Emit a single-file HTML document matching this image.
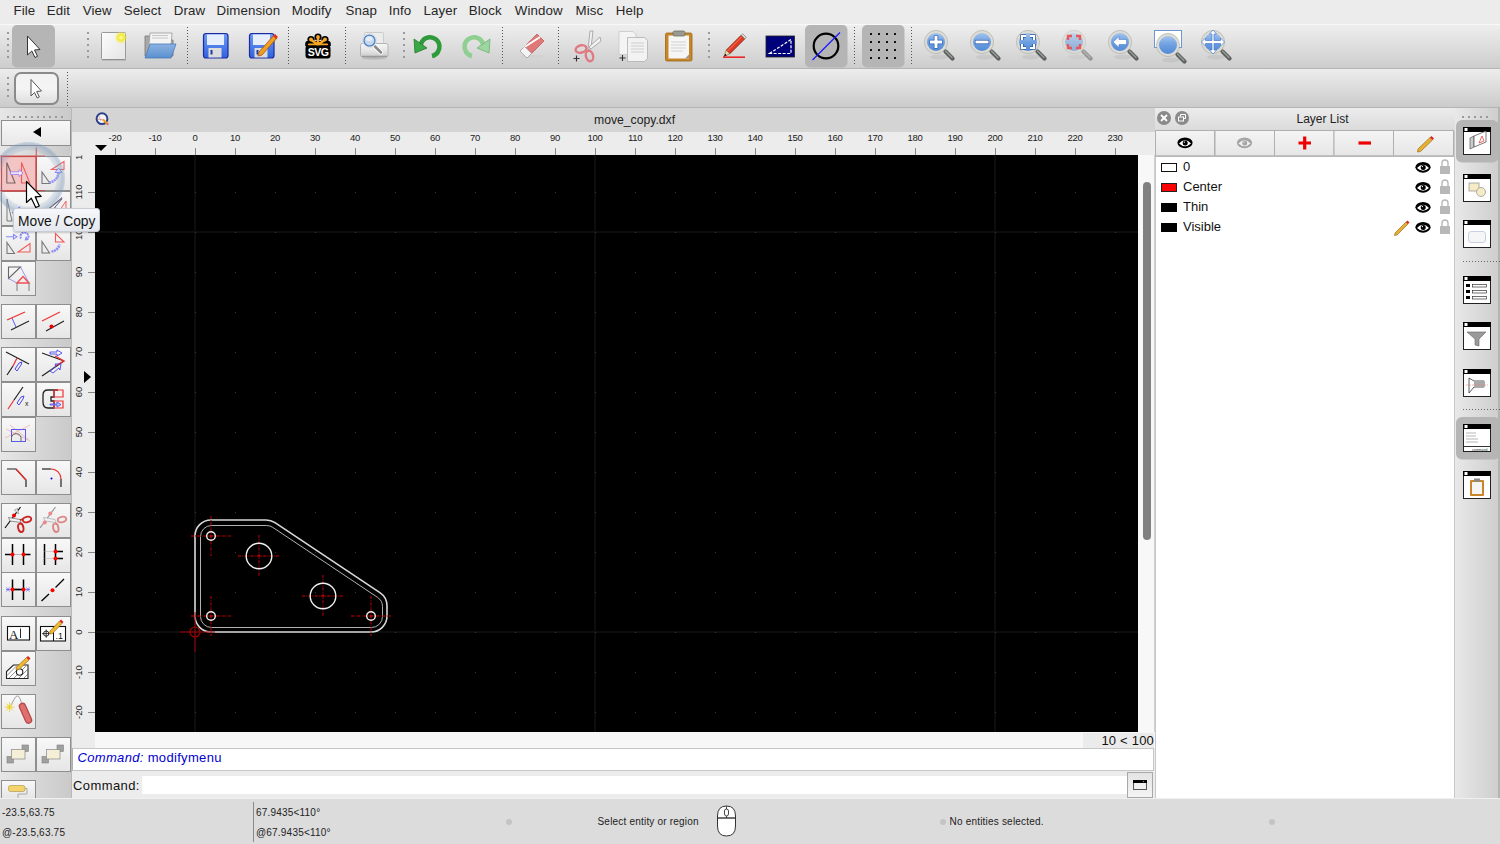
<!DOCTYPE html>
<html><head><meta charset="utf-8"><style>
*{margin:0;padding:0;box-sizing:border-box}
html,body{width:1500px;height:844px;overflow:hidden;background:#ececec;font-family:"Liberation Sans",sans-serif;color:#222}
.a{position:absolute}
.mi{position:absolute;top:2px;font-size:13.3px;line-height:17px;color:#262626;letter-spacing:0.1px}
.rl{position:absolute;width:40px;text-align:center;font-size:9.5px;line-height:12px;color:#222;letter-spacing:-0.3px}
.rv{position:absolute;width:23px;height:40px}
.rv span{position:absolute;left:50%;top:50%;width:40px;margin-left:-20px;margin-top:-6px;text-align:center;font-size:9.5px;line-height:12px;transform:rotate(-90deg);color:#222}
.lt{position:absolute;left:1183px;font-size:13px;line-height:16px;color:#111}
.st{position:absolute;font-size:10px;line-height:12px;color:#222;letter-spacing:0.2px}

</style></head><body>
<div class="a" style="left:0;top:0;width:1500px;height:23px;background:#ececec"></div>
<div class="mi" style="left:13.5px">File</div><div class="mi" style="left:46.7px">Edit</div><div class="mi" style="left:82.8px">View</div><div class="mi" style="left:123.7px">Select</div><div class="mi" style="left:173.7px">Draw</div><div class="mi" style="left:216.6px">Dimension</div><div class="mi" style="left:291.8px">Modify</div><div class="mi" style="left:345.6px">Snap</div><div class="mi" style="left:388.7px">Info</div><div class="mi" style="left:423.6px">Layer</div><div class="mi" style="left:468.7px">Block</div><div class="mi" style="left:514.8px">Window</div><div class="mi" style="left:575.6px">Misc</div><div class="mi" style="left:615.7px">Help</div>
<div class="a" style="left:0;top:24px;width:1500px;height:45px;background:linear-gradient(#eeeeee,#cdcdcd);border-top:1px solid #f8f8f8;border-bottom:1px solid #b4b4b4"></div>
<div class="a" style="left:0;top:69px;width:1500px;height:39px;background:linear-gradient(#ededed,#cbcbcb);border-bottom:1px solid #b4b4b4"></div>
<svg class="a" style="left:0;top:23px" width="1500" height="85" viewBox="0 23 1500 85">
<defs>
<linearGradient id="gdoc" x1="0" y1="0" x2="1" y2="1"><stop offset="0" stop-color="#fdfdfd"/><stop offset="1" stop-color="#e4e4e4"/></linearGradient>
<radialGradient id="gglow"><stop offset="0" stop-color="#ffffc0"/><stop offset="0.45" stop-color="#f4ea30"/><stop offset="1" stop-color="#f4ea30" stop-opacity="0"/></radialGradient>
<linearGradient id="gfold" x1="0" y1="0" x2="0" y2="1"><stop offset="0" stop-color="#8db4e2"/><stop offset="1" stop-color="#5a8fd0"/></linearGradient>
<linearGradient id="gzoom" x1="0" y1="0" x2="0" y2="1"><stop offset="0" stop-color="#a9c8f0"/><stop offset="0.5" stop-color="#6d9fe0"/><stop offset="1" stop-color="#5088d6"/></linearGradient>
<linearGradient id="gfl" x1="0" y1="0" x2="0" y2="1"><stop offset="0" stop-color="#6f9cf5"/><stop offset="1" stop-color="#2f62e0"/></linearGradient>
<g id="zmag"><ellipse cx="3" cy="15" rx="9" ry="2.5" fill="#000" opacity="0.06"/><path d="M9.5 9.5L16.5 16.5" stroke="#5e625e" stroke-width="4.2" stroke-linecap="round"/><path d="M9.5 9L16 15.5" stroke="#9a9e9a" stroke-width="1.2" stroke-linecap="round"/><circle cx="0" cy="0" r="10.2" fill="url(#gzoom)" stroke="#dcdcd4" stroke-width="2.4"/><circle cx="0" cy="0" r="11.6" fill="none" stroke="#a8a8a0" stroke-width="0.6"/></g>
</defs>
<!-- grips -->
<g fill="#9a9a9a">
<rect x="7" y="32" width="2" height="2"/><rect x="7" y="38" width="2" height="2"/><rect x="7" y="44" width="2" height="2"/><rect x="7" y="50" width="2" height="2"/><rect x="7" y="56" width="2" height="2"/>
<rect x="87" y="32" width="2" height="2"/><rect x="87" y="38" width="2" height="2"/><rect x="87" y="44" width="2" height="2"/><rect x="87" y="50" width="2" height="2"/><rect x="87" y="56" width="2" height="2"/>
<rect x="403" y="32" width="2" height="2"/><rect x="403" y="38" width="2" height="2"/><rect x="403" y="44" width="2" height="2"/><rect x="403" y="50" width="2" height="2"/><rect x="403" y="56" width="2" height="2"/>
<rect x="708" y="32" width="2" height="2"/><rect x="708" y="38" width="2" height="2"/><rect x="708" y="44" width="2" height="2"/><rect x="708" y="50" width="2" height="2"/><rect x="708" y="56" width="2" height="2"/>
<rect x="7" y="77" width="2" height="2"/><rect x="7" y="83" width="2" height="2"/><rect x="7" y="89" width="2" height="2"/><rect x="7" y="95" width="2" height="2"/>
</g>
<!-- dotted separators -->
<g stroke="#555" stroke-width="1" stroke-dasharray="1 2">
<path d="M187.5 27V66M288.5 27V66M345.5 27V66M502.5 27V66M558.5 27V66M854.5 27V66M911.5 27V66M67.5 72V106"/>
</g>
<!-- selected pointer -->
<rect x="12" y="25" width="43" height="42.5" rx="5" fill="#b5b5b5"/>
<path d="M27.5 36 V55 L31.8 51 L35 57.5 L37.5 56.3 L34.5 50 L40 49.5 Z" fill="#fff" stroke="#333" stroke-width="1" stroke-linejoin="round"/>
<!-- tb2 pointer button -->
<linearGradient id="gtb2" x1="0" y1="0" x2="0" y2="1"><stop offset="0" stop-color="#f2f2f2"/><stop offset="0.5" stop-color="#f4f4f4"/><stop offset="1" stop-color="#dedede"/></linearGradient>
<rect x="15" y="73" width="43" height="31" rx="6" fill="url(#gtb2)" stroke="#8a8a8a" stroke-width="2"/>
<path d="M31 79.5 V96 L34.5 92.5 L37.2 98 L39.3 97 L36.7 91.5 L41.5 91 Z" fill="#fff" stroke="#444" stroke-width="0.9" stroke-linejoin="round"/>
<!-- new -->
<rect x="101.5" y="32.5" width="24" height="27" rx="1" fill="url(#gdoc)" stroke="#9a9a9a"/>
<rect x="102" y="59" width="24" height="1.5" fill="#888" opacity="0.6"/>
<circle cx="121" cy="37.5" r="6.5" fill="url(#gglow)"/>
<!-- open -->
<path d="M145 36 h20 l2 4 h6 v16 h-28z" fill="#a8a8a8" stroke="#777" stroke-width="0.8"/>
<path d="M150 33 h22 l-1 12 h-22z" fill="#f4f4f4" stroke="#999" stroke-width="0.8"/>
<path d="M152 35.5h16M152 38h16" stroke="#bbb" stroke-width="0.8"/>
<path d="M150 44 H176 L171 58 H145 Z" fill="url(#gfold)" stroke="#4a78b8" stroke-width="0.8"/>
<!-- save -->
<rect x="203.5" y="33.5" width="24.5" height="24.5" rx="2.5" fill="url(#gfl)" stroke="#1c2a9c" stroke-width="1.2"/>
<rect x="207" y="34.5" width="17" height="10.5" fill="#e6eefc"/>
<rect x="208.5" y="48" width="13" height="9.5" fill="#dcdcdc"/>
<rect x="210.5" y="50" width="2" height="4.5" fill="#1c3aa8"/>
<!-- save as -->
<rect x="249.5" y="33.5" width="24.5" height="24.5" rx="2.5" fill="url(#gfl)" stroke="#1c2a9c" stroke-width="1.2"/>
<rect x="253" y="34.5" width="17" height="10.5" fill="#e6eefc"/>
<rect x="254.5" y="48" width="13" height="9.5" fill="#dcdcdc"/>
<rect x="256.5" y="50" width="2" height="4.5" fill="#1c3aa8"/>
<path d="M259 52 L274 35 L277 38 L262 55 L258 56 Z" fill="#f0a020" stroke="#a0501a" stroke-width="0.8"/>
<path d="M273 36 L275 34 L278 37 L276 39 Z" fill="#e03020"/>
<!-- svg -->
<g fill="#000">
<circle cx="318" cy="37" r="3.6"/><circle cx="311" cy="39.5" r="3.6"/><circle cx="325" cy="39.5" r="3.6"/><circle cx="308.5" cy="44" r="3.3"/><circle cx="327.5" cy="44" r="3.3"/>
<path d="M308 41L328 41L331 46H305Z"/>
</g>
<g stroke="#f6a623" stroke-linecap="round">
<path d="M318 45V37.5M318 45L311.5 40M318 45L324.5 40" stroke-width="2.4"/>
<path d="M309 44.5H327" stroke-width="2.2"/>
</g>
<g fill="#f6a623"><circle cx="318" cy="37" r="1.9"/><circle cx="311" cy="39.5" r="1.9"/><circle cx="325" cy="39.5" r="1.9"/></g>
<rect x="305.5" y="45.5" width="25" height="13" rx="3" fill="#000"/>
<text x="318" y="56.3" font-family="Liberation Sans" font-weight="bold" font-size="11.5" fill="#fff" text-anchor="middle" letter-spacing="-0.6" transform="translate(318 0) scale(0.92 1) translate(-318 0)">SVG</text>
<!-- print preview -->
<linearGradient id="gprt" x1="0" y1="0" x2="0" y2="1"><stop offset="0" stop-color="#f8f8f8"/><stop offset="0.6" stop-color="#e2e2e2"/><stop offset="1" stop-color="#c8c8c8"/></linearGradient>
<rect x="364.5" y="32.5" width="19" height="13" rx="1" fill="#ececec" stroke="#c4c4c4" stroke-width="0.8"/>
<rect x="360.5" y="43.5" width="27.5" height="13.5" rx="2" fill="url(#gprt)" stroke="#b4b4b4" stroke-width="1"/>
<path d="M362 56.5H387" stroke="#9a9a9a" stroke-width="1.5"/>
<ellipse cx="374" cy="58.5" rx="12" ry="1.2" fill="#000" opacity="0.12"/>
<path d="M375 46.5L381 52.5" stroke="#fff" stroke-width="4.5" stroke-linecap="round"/>
<path d="M375 46.5L381 52.5" stroke="#8a8a8a" stroke-width="2.6" stroke-linecap="round"/>
<circle cx="369.5" cy="40.6" r="6.9" fill="#f4f4f4" stroke="#d0d0d0" stroke-width="0.6"/>
<circle cx="369.5" cy="40.6" r="5.5" fill="#c6d8ee" stroke="#4a80c8" stroke-width="1.3"/>
<ellipse cx="369" cy="38.8" rx="3.5" ry="2.2" fill="#fff" opacity="0.55"/>
<!-- undo -->
<path d="M420.5 47 A9.5 9.5 0 1 1 432 56" fill="none" stroke="#2f9a3a" stroke-width="4.5"/>
<path d="M414 39 L415 53 L427 48 Z" fill="#3aa845" stroke="#237a2a" stroke-width="0.8"/>
<!-- redo -->
<path d="M483.5 47 A9.5 9.5 0 1 0 472 56" fill="none" stroke="#8fcf92" stroke-width="4.5"/>
<path d="M490 39 L489 53 L477 48 Z" fill="#9ed6a0" stroke="#70b074" stroke-width="0.8"/>
<!-- eraser -->
<ellipse cx="532" cy="56.5" rx="12" ry="1.8" fill="#cfcfcf" opacity="0.8"/>
<path d="M520 51 L537 34 L544 41 L527 58 Z" fill="#e07878" stroke="#c05a5a" stroke-width="0.8"/>
<path d="M523 48 L540 37" stroke="#fff" stroke-width="2"/>
<path d="M520 51 L524.5 46.5 L531.5 53.5 L527 58 Z" fill="#f4f4f4" stroke="#aaa" stroke-width="0.8"/>
<!-- cut -->
<path d="M588 50 L590 31 L593 31 L591 48 Z" fill="#f2f2f2" stroke="#999" stroke-width="0.8"/>
<path d="M589 47 L600 37 L601 41 L591 49 Z" fill="#f2f2f2" stroke="#999" stroke-width="0.8"/>
<ellipse cx="581" cy="49" rx="5.5" ry="3.6" fill="none" stroke="#e07a82" stroke-width="2.4" transform="rotate(-15 581 49)"/>
<ellipse cx="589.5" cy="56" rx="3.6" ry="5.3" fill="none" stroke="#e07a82" stroke-width="2.4" transform="rotate(-15 589.5 56)"/>
<path d="M573.5 58.5h6M576.5 55.5v6" stroke="#333" stroke-width="1.1"/>
<!-- copy -->
<path d="M619 31.5 h14 l3 3 v20 h-17z" fill="#f4f4f4" stroke="#c8c8c8" stroke-width="0.8"/>
<path d="M627.5 37.5 h17 l3 3 v18 l-3 3 h-17z" fill="#f2f2f2" stroke="#b0b0b0" stroke-width="0.8"/>
<path d="M631 43h13M631 46h13M631 49h13M631 52h13" stroke="#c4c4c4" stroke-width="0.8"/>
<path d="M619.5 58h6M622.5 55v6" stroke="#333" stroke-width="1.1"/>
<!-- paste -->
<rect x="665.5" y="33" width="26.5" height="28" rx="1.5" fill="#c7862a" stroke="#9a6418" stroke-width="0.8"/>
<rect x="668.5" y="35.5" width="20.5" height="23" fill="#f6f6f6"/>
<path d="M671 42h15M671 45h15M671 48h15M671 51h12" stroke="#c8c8c8" stroke-width="0.8"/>
<path d="M685 58.5 L689 54.5 V58.5Z" fill="#999"/>
<rect x="673" y="31" width="12" height="5" rx="1.5" fill="#9a9a90" stroke="#6e6e66" stroke-width="0.8"/>
<!-- pencil -->
<path d="M726.2 50.2L729.8 53.8L744.8 38.8L741.2 35.2Z" fill="#e03a22" stroke="#7a1a10" stroke-width="0.8"/>
<path d="M727.5 51L741.5 37" stroke="#ff7a5a" stroke-width="1"/>
<path d="M741.2 35.2L744.8 38.8L746.3 37.3L742.7 33.7Z" fill="#d8d8d8" stroke="#777" stroke-width="0.6"/>
<path d="M726.2 50.2L729.8 53.8L724 56.5Z" fill="#f0d8a8" stroke="#7a5a30" stroke-width="0.6"/>
<path d="M724 56.5L725.2 53.8L726.8 55.3Z" fill="#111"/>
<rect x="723" y="56.5" width="22" height="1.3" fill="#e00"/>
<!-- dim -->
<rect x="766" y="36" width="28.5" height="21" fill="#00007a" stroke="#222" stroke-width="0.8"/>
<path d="M769.5 53.5 L791 39.5 V53.5 Z" fill="none" stroke="#fff" stroke-width="1.2" stroke-dasharray="3 1.5"/>
<!-- circle selected -->
<rect x="805" y="25" width="42.5" height="42.5" rx="5" fill="#b5b5b5"/>
<circle cx="826" cy="46" r="12.3" fill="none" stroke="#000" stroke-width="2.2"/>
<path d="M812.5 60 L840 32.5" stroke="#1a1aff" stroke-width="1.2"/>
<!-- grid selected -->
<rect x="862" y="25" width="42.5" height="42.5" rx="5" fill="#b5b5b5"/>
<g fill="#111">
<rect x="870" y="33" width="2" height="2"/><rect x="878" y="33" width="2" height="2"/><rect x="886" y="33" width="2" height="2"/><rect x="894" y="33" width="2" height="2"/>
<rect x="870" y="41" width="2" height="2"/><rect x="878" y="41" width="2" height="2"/><rect x="886" y="41" width="2" height="2"/><rect x="894" y="41" width="2" height="2"/>
<rect x="870" y="49" width="2" height="2"/><rect x="878" y="49" width="2" height="2"/><rect x="886" y="49" width="2" height="2"/><rect x="894" y="49" width="2" height="2"/>
<rect x="870" y="57" width="2" height="2"/><rect x="878" y="57" width="2" height="2"/><rect x="886" y="57" width="2" height="2"/><rect x="894" y="57" width="2" height="2"/>
</g>
<!-- zoom icons -->
<use href="#zmag" x="936" y="42"/>
<path d="M929.5 42h13M936 35.5v13" stroke="#2a58a8" stroke-width="4.4"/><path d="M930 42h12M936 36v12" stroke="#fff" stroke-width="3"/>
<use href="#zmag" x="982" y="42"/>
<path d="M975 42h14" stroke="#2a58a8" stroke-width="4.2"/><path d="M975.5 42h13" stroke="#fff" stroke-width="2.8"/>
<use href="#zmag" x="1028" y="42"/>
<path d="M1022 40v-4h4M1030 36h4v4M1034 44v4h-4M1026 48h-4v-4" fill="none" stroke="#2a58a8" stroke-width="3.4"/><path d="M1022 40v-4h4M1030 36h4v4M1034 44v4h-4M1026 48h-4v-4" fill="none" stroke="#fff" stroke-width="2"/>
<g opacity="0.55"><use href="#zmag" x="1074" y="42"/></g>
<path d="M1068 40v-4h4M1076 36h4v4M1080 44v4h-4M1072 48h-4v-4" fill="none" stroke="#e85858" stroke-width="2.4"/>
<use href="#zmag" x="1120" y="42"/>
<path d="M1113 42 L1119 36.5 V39.5 H1126.5 V44.5 H1119 V47.5 Z" fill="#fff" stroke="#4d7ec8" stroke-width="0.6"/>
<rect x="1154.5" y="30.5" width="27" height="17" fill="#fff" stroke="#6a96d8" stroke-width="1"/>
<use href="#zmag" x="1168" y="45"/>
<use href="#zmag" x="1213" y="42"/>
<path d="M1213 30 L1209.5 34 H1212 V40.5 H1205.5 V38 L1201.5 42 L1205.5 46 V43.5 H1212 V50 H1209.5 L1213 54 L1216.5 50 H1214 V43.5 H1220.5 V46 L1224.5 42 L1220.5 38 V40.5 H1214 V34 H1216.5 Z" fill="#fff" stroke="#4d7ec8" stroke-width="0.7"/>
</svg>

<div class="a" style="left:0;top:108px;width:72px;height:690px;background:linear-gradient(90deg,#e6e6e6,#c9c9c9)"></div>
<div class="a" style="left:71px;top:108px;width:1px;height:690px;background:#b8b8b8"></div>
<div class="a" style="left:1px;top:120px;width:70px;height:26px;border:1px solid #8e8e8e;background:linear-gradient(#f7f7f7,#e8e8e8)"></div><div class="a" style="left:33px;top:127px;width:0;height:0;border-top:5px solid transparent;border-bottom:5px solid transparent;border-right:8px solid #000"></div><div class="a" style="left:1px;top:156px;width:35px;height:35px;border:1px solid #8e8e8e;background:linear-gradient(#f8f8f8,#e6e6e6)"></div><div class="a" style="left:36px;top:156px;width:35px;height:35px;border:1px solid #8e8e8e;background:linear-gradient(#f8f8f8,#e6e6e6)"></div><div class="a" style="left:1px;top:191px;width:35px;height:35px;border:1px solid #8e8e8e;background:linear-gradient(#f8f8f8,#e6e6e6)"></div><div class="a" style="left:36px;top:191px;width:35px;height:35px;border:1px solid #8e8e8e;background:linear-gradient(#f8f8f8,#e6e6e6)"></div><div class="a" style="left:1px;top:226px;width:35px;height:35px;border:1px solid #8e8e8e;background:linear-gradient(#f8f8f8,#e6e6e6)"></div><div class="a" style="left:36px;top:226px;width:35px;height:35px;border:1px solid #8e8e8e;background:linear-gradient(#f8f8f8,#e6e6e6)"></div><div class="a" style="left:1px;top:261px;width:35px;height:35px;border:1px solid #8e8e8e;background:linear-gradient(#f8f8f8,#e6e6e6)"></div><div class="a" style="left:1px;top:304px;width:35px;height:35px;border:1px solid #8e8e8e;background:linear-gradient(#f8f8f8,#e6e6e6)"></div><div class="a" style="left:36px;top:304px;width:35px;height:35px;border:1px solid #8e8e8e;background:linear-gradient(#f8f8f8,#e6e6e6)"></div><div class="a" style="left:1px;top:347px;width:35px;height:35px;border:1px solid #8e8e8e;background:linear-gradient(#f8f8f8,#e6e6e6)"></div><div class="a" style="left:36px;top:347px;width:35px;height:35px;border:1px solid #8e8e8e;background:linear-gradient(#f8f8f8,#e6e6e6)"></div><div class="a" style="left:1px;top:382px;width:35px;height:35px;border:1px solid #8e8e8e;background:linear-gradient(#f8f8f8,#e6e6e6)"></div><div class="a" style="left:36px;top:382px;width:35px;height:35px;border:1px solid #8e8e8e;background:linear-gradient(#f8f8f8,#e6e6e6)"></div><div class="a" style="left:1px;top:417px;width:35px;height:35px;border:1px solid #8e8e8e;background:linear-gradient(#f8f8f8,#e6e6e6)"></div><div class="a" style="left:1px;top:460px;width:35px;height:35px;border:1px solid #8e8e8e;background:linear-gradient(#f8f8f8,#e6e6e6)"></div><div class="a" style="left:36px;top:460px;width:35px;height:35px;border:1px solid #8e8e8e;background:linear-gradient(#f8f8f8,#e6e6e6)"></div><div class="a" style="left:1px;top:503px;width:35px;height:35px;border:1px solid #8e8e8e;background:linear-gradient(#f8f8f8,#e6e6e6)"></div><div class="a" style="left:36px;top:503px;width:35px;height:35px;border:1px solid #8e8e8e;background:linear-gradient(#f8f8f8,#e6e6e6)"></div><div class="a" style="left:1px;top:538px;width:35px;height:35px;border:1px solid #8e8e8e;background:linear-gradient(#f8f8f8,#e6e6e6)"></div><div class="a" style="left:36px;top:538px;width:35px;height:35px;border:1px solid #8e8e8e;background:linear-gradient(#f8f8f8,#e6e6e6)"></div><div class="a" style="left:1px;top:572px;width:35px;height:35px;border:1px solid #8e8e8e;background:linear-gradient(#f8f8f8,#e6e6e6)"></div><div class="a" style="left:36px;top:572px;width:35px;height:35px;border:1px solid #8e8e8e;background:linear-gradient(#f8f8f8,#e6e6e6)"></div><div class="a" style="left:1px;top:616px;width:35px;height:35px;border:1px solid #8e8e8e;background:linear-gradient(#f8f8f8,#e6e6e6)"></div><div class="a" style="left:36px;top:616px;width:35px;height:35px;border:1px solid #8e8e8e;background:linear-gradient(#f8f8f8,#e6e6e6)"></div><div class="a" style="left:1px;top:651px;width:35px;height:35px;border:1px solid #8e8e8e;background:linear-gradient(#f8f8f8,#e6e6e6)"></div><div class="a" style="left:1px;top:694px;width:35px;height:35px;border:1px solid #8e8e8e;background:linear-gradient(#f8f8f8,#e6e6e6)"></div><div class="a" style="left:1px;top:737px;width:35px;height:35px;border:1px solid #8e8e8e;background:linear-gradient(#f8f8f8,#e6e6e6)"></div><div class="a" style="left:36px;top:737px;width:35px;height:35px;border:1px solid #8e8e8e;background:linear-gradient(#f8f8f8,#e6e6e6)"></div><div class="a" style="left:1px;top:780px;width:35px;height:19px;border:1px solid #8e8e8e;background:linear-gradient(#f8f8f8,#e6e6e6)"></div><svg class="a" style="left:0;top:108px" width="72" height="690" viewBox="0 108 72 690"><g fill="#9a9a9a"><rect x="7" y="116" width="2" height="2"/><rect x="13" y="116" width="2" height="2"/><rect x="19" y="116" width="2" height="2"/><rect x="25" y="116" width="2" height="2"/><rect x="31" y="116" width="2" height="2"/><rect x="37" y="116" width="2" height="2"/><rect x="43" y="116" width="2" height="2"/><rect x="49" y="116" width="2" height="2"/><rect x="55" y="116" width="2" height="2"/><rect x="61" y="116" width="2" height="2"/></g><!-- row1 btn1 hovered -->
<rect x="1.5" y="156.5" width="34.5" height="34.5" fill="#f2c4c4" stroke="#cc4a4a" stroke-width="1.2"/>
<path d="M0 156H45M0 190.7H45M36.3 147.5V192" stroke="#d04040" stroke-width="1.2" opacity="0.75"/>
<path d="M6.8 162.5V183H15Z" fill="none" stroke="#7a6262" stroke-width="1.1"/>
<path d="M21.5 162.5V183H29.8Z" fill="none" stroke="#ee5a5a" stroke-width="1.1"/>
<path d="M10.5 171.8h8.5v-2.2l4 3.5l-4 3.5v-2.2h-8.5z" fill="#f6ecf6" stroke="#a080f0" stroke-width="0.9"/>
<!-- row1 btn2 rotate -->
<path d="M42 172V183.5H50Z" fill="none" stroke="#777" stroke-width="1.1"/>
<path d="M51.5 169.5L64 161.5V169.5Z" fill="none" stroke="#f06060" stroke-width="1.1"/>
<path d="M49 182.5A10.5 10.5 0 0 0 58.5 171" fill="none" stroke="#9090f8" stroke-width="2.4" stroke-dasharray="2 0.6"/>
<path d="M55 172.5L58.5 168L62 172.5Z" fill="#f0f0ff" stroke="#9090f8" stroke-width="1"/>
<!-- row2 btn1 scale (partly hidden) -->
<path d="M7 199V221H12Z" fill="none" stroke="#7a7a7a" stroke-width="1"/>
<path d="M22 210V221H30Z" fill="none" stroke="#f06060" stroke-width="1"/>
<path d="M12 213 L20 207" stroke="#8080f0" stroke-width="1.5"/>
<!-- row2 btn2 mirror -->
<path d="M41 215 L62 198" stroke="#666" stroke-width="1.2"/>
<path d="M44 220 L62 199" stroke="#666" stroke-width="1"/>
<path d="M58 213L66 201V213Z" fill="none" stroke="#f06060" stroke-width="1"/>
<path d="M62 197 L47 222" stroke="#8080f0" stroke-width="1" stroke-dasharray="2 2"/>
<!-- row3 btn1 -->
<path d="M6 236.8h7.5v-2.3l3.5 2.3l-3.5 2.3v-2.3" fill="none" stroke="#8a8af8" stroke-width="1.1"/>
<path d="M21 238.5A4 4 0 1 1 27 239.5" fill="none" stroke="#8a8af8" stroke-width="2" stroke-dasharray="2 0.7"/>
<path d="M26 236L28.5 240L24.5 240.5Z" fill="#8a8af8"/>
<path d="M7 242.5V253.5H14.5Z" fill="none" stroke="#777" stroke-width="1.1"/>
<path d="M18 252L30 243.5V252Z" fill="none" stroke="#f05a5a" stroke-width="1.1"/>
<!-- row3 btn2 -->
<path d="M42 241.5V253H49.5Z" fill="none" stroke="#777" stroke-width="1.1"/>
<path d="M55.5 233.5V242H64Z" fill="none" stroke="#f05a5a" stroke-width="1.1"/>
<path d="M51.5 251.5A9 9 0 0 0 59.5 244.5" fill="none" stroke="#8a8af8" stroke-width="2.6" stroke-dasharray="2 0.6"/>
<!-- row4 btn1 -->
<path d="M8.5 278.5V267H20.5Z" fill="none" stroke="#666" stroke-width="1.1"/>
<path d="M20.5 267L29 283M8.5 278.5L17 283" fill="none" stroke="#8080f0" stroke-width="0.8"/>
<path d="M17 283L23 276.5L29 283H17Z" fill="none" stroke="#f05050" stroke-width="1.4"/>
<path d="M17 283V291M29 283V291" stroke="#888" stroke-width="1.1"/>
<!-- row5 -->
<path d="M7 320L25 312" stroke="#f03030" stroke-width="1.2"/>
<path d="M11 330L29 321" stroke="#222" stroke-width="1.2"/>
<path d="M12 318L16 327" stroke="#4a4af0" stroke-width="0.9"/>
<path d="M42 321L60 312" stroke="#f03030" stroke-width="1.2"/>
<path d="M46 331L64 321" stroke="#222" stroke-width="1.2"/>
<circle cx="51.5" cy="326.5" r="2" fill="#e00"/>
<!-- row6 -->
<path d="M6 352L29 364" stroke="#222" stroke-width="1.2"/>
<path d="M7 375L13 366" stroke="#222" stroke-width="1.2"/>
<path d="M13 366L17 358" stroke="#f03030" stroke-width="1.2"/>
<path d="M15 369L19 363L22 362L21 365L17 371Z" fill="none" stroke="#4a4af0" stroke-width="1"/>
<path d="M42 353L64 361" stroke="#222" stroke-width="1.2"/>
<path d="M42 376L64 361" stroke="#222" stroke-width="1.2"/>
<path d="M55 356L64 361L55 366" fill="none" stroke="#f03030" stroke-width="1.4"/>
<path d="M50 352h7v-2l5 3l-5 3v-2h-7z M50 371l6-5l-1-2l6 0l-1 6l-1-2l-6 5z" fill="none" stroke="#4a4af0" stroke-width="0.9"/>
<!-- row7 -->
<path d="M8 409L14 400" stroke="#f03030" stroke-width="1.2"/>
<path d="M14 400L23 387" stroke="#222" stroke-width="1.2"/>
<path d="M17 403L21 397L24 396L23 399L19 405Z" fill="none" stroke="#4a4af0" stroke-width="1"/>
<text x="25" y="406" font-family="Liberation Sans" font-size="7" fill="#222">x</text>
<path d="M58 390H48Q43 390 43 395V402Q43 408 48 408H54V401H51V397H54V390Z" fill="none" stroke="#222" stroke-width="1.3"/>
<path d="M54 390H63V397H54ZM54 401H63V408H54Z" fill="none" stroke="#f03030" stroke-width="1.2"/>
<path d="M50 404h7v-2l4 2.5l-4 2.5v-2h-7z" fill="#c0c0ff" stroke="#4a4af0" stroke-width="0.8"/>
<!-- row8 -->
<g opacity="0.35"><path d="M5 438L30 425M10 425L30 441M6 429L28 440" stroke="#f04040" stroke-width="0.8"/></g>
<rect x="11.5" y="429.5" width="14" height="12" fill="none" stroke="#5a5af0" stroke-width="1"/>
<path d="M11.5 441.5V437A5 5 0 0 1 21 437V441.5" fill="none" stroke="#666" stroke-width="1"/>
<!-- row9 -->
<path d="M7 469H16L26 480V487" fill="none" stroke="#222" stroke-width="1.2"/>
<path d="M16 469L26 480" stroke="#f03030" stroke-width="1.2"/>
<path d="M42 469H51" stroke="#222" stroke-width="1.2"/>
<path d="M51 469A10 10 0 0 1 61 479" fill="none" stroke="#f03030" stroke-width="1.2"/>
<path d="M61 479V487" stroke="#222" stroke-width="1.2"/>
<circle cx="51.5" cy="478.5" r="1" fill="#00e"/>
<!-- row10 scissors -->
<path d="M5 528L20.5 507" stroke="#111" stroke-width="1.2"/>
<path d="M14.5 510L17.5 508.5L18.5 514Z" fill="#eee" stroke="#777" stroke-width="0.6"/>
<path d="M8.5 517.5L20 519.5L21 522.5L10 521Z" fill="#f4f4f4" stroke="#666" stroke-width="0.7"/>
<circle cx="14" cy="515.6" r="2" fill="#e00"/>
<path d="M20 520Q22 519.5 23 519" stroke="#c22" stroke-width="1.6"/>
<ellipse cx="27" cy="519.5" rx="4.3" ry="2.7" fill="none" stroke="#cc2222" stroke-width="1.9" transform="rotate(-12 27 519.5)"/>
<ellipse cx="20.8" cy="527.8" rx="2.6" ry="4.3" fill="none" stroke="#cc2222" stroke-width="1.9" transform="rotate(-12 20.8 527.8)"/>
<g opacity="0.5">
<path d="M40 528L55.5 507" stroke="#333" stroke-width="1.1"/>
<path d="M43.5 517.5L55 519.5L56 522.5L45 521Z" fill="#f4f4f4" stroke="#666" stroke-width="0.7"/>
<circle cx="50.3" cy="513.5" r="2" fill="#e22"/>
<circle cx="44.8" cy="522.5" r="2" fill="#e22"/>
<ellipse cx="62" cy="519.5" rx="4.3" ry="2.7" fill="none" stroke="#cc2222" stroke-width="1.9" transform="rotate(-12 62 519.5)"/>
<ellipse cx="55.8" cy="527.8" rx="2.6" ry="4.3" fill="none" stroke="#cc2222" stroke-width="1.9" transform="rotate(-12 55.8 527.8)"/>
</g>
<!-- row11 -->
<path d="M12.5 544V565M23.5 544V565" stroke="#000" stroke-width="1.5"/>
<path d="M5 554.5H12.5M23.5 554.5H30.5" stroke="#000" stroke-width="1.6"/>
<path d="M12.5 554.5H23.5" stroke="#aaa" stroke-width="0.8"/>
<circle cx="12.5" cy="554.5" r="2" fill="#f00"/><circle cx="23.5" cy="554.5" r="2" fill="#f00"/>
<path d="M44.5 544V565M55.5 544V565" stroke="#000" stroke-width="1.5"/>
<path d="M44.5 551.5H55.5M44.5 558.5H55.5" stroke="#999" stroke-width="0.8" stroke-dasharray="1 1"/>
<path d="M55.5 551.5H63M55.5 558.5H63" stroke="#000" stroke-width="1.6"/>
<circle cx="55.5" cy="551.5" r="2" fill="#f00"/><circle cx="55.5" cy="558.5" r="2" fill="#f00"/>
<!-- row12 -->
<path d="M12.5 579.5V600M23.5 579.5V600" stroke="#000" stroke-width="1.5"/>
<path d="M12.5 589.5H23.5" stroke="#000" stroke-width="1.7"/>
<path d="M6.5 587.5L9.5 591.5M6.5 591.5L9.5 587.5M26.5 587.5L29.5 591.5M26.5 591.5L29.5 587.5M6 589.5H12.5M23.5 589.5H30" stroke="#6a6af0" stroke-width="0.8"/>
<circle cx="12.5" cy="589.5" r="2" fill="#f00"/><circle cx="23.5" cy="589.5" r="2" fill="#f00"/>
<path d="M41.5 601L49 594M55.5 587.5L64 579" stroke="#000" stroke-width="1.3"/>
<circle cx="52.5" cy="590.3" r="2" fill="#f00"/>
<!-- row13 -->
<rect x="7.5" y="626.5" width="22" height="13.5" fill="#fff" stroke="#111" stroke-width="1.1"/>
<text x="9" y="638.5" font-family="Liberation Serif" font-size="13" fill="#111">A</text>
<path d="M20.5 628.5V638" stroke="#111" stroke-width="0.9"/>
<rect x="40.5" y="626.5" width="25" height="14.5" fill="#fff" stroke="#111" stroke-width="1.1"/>
<path d="M53.5 626.5V641" stroke="#111"/>
<circle cx="46.2" cy="633.6" r="2.6" fill="none" stroke="#111" stroke-width="0.9"/><path d="M42 633.6H50.5M46.2 629.5V637.8" stroke="#111" stroke-width="0.8"/>
<text x="55.5" y="639" font-family="Liberation Sans" font-size="9" fill="#111">.1</text>
<path d="M50 631L59.5 621L62 623.5L52.5 633.5L49.5 634Z" fill="#f0b830" stroke="#8a6010" stroke-width="0.6"/>
<path d="M59.5 621L61 619.5L63.5 622L62 623.5Z" fill="#e02020"/>
<!-- row14 -->
<path d="M6.5 678.5V671.5L13.5 665H28V678.5Z" fill="#fff" stroke="#222" stroke-width="1.1"/>
<path d="M9 678L21 666M14 678L26 666M19 678L28 669M24 678L28 674M6.5 676L16.5 666" stroke="#666" stroke-width="0.7"/>
<circle cx="19.6" cy="672" r="3.2" fill="#fff" stroke="#222" stroke-width="1.1"/>
<path d="M16.5 667L26.5 657.5L29 660L19 669.5L16 670Z" fill="#f0b830" stroke="#8a6010" stroke-width="0.6"/>
<path d="M26.5 657.5L28 656L30.5 658.5L29 660Z" fill="#e02020"/>
<!-- row15 dynamite -->
<path d="M22.5 706.5L28.5 720" stroke="#b84848" stroke-width="7.5" stroke-linecap="round"/>
<path d="M22.5 706.5L28.5 720" stroke="#de7070" stroke-width="5" stroke-linecap="round"/>
<path d="M21.5 703Q19 693 15.5 697Q13 701 11 705" fill="none" stroke="#999" stroke-width="0.9"/>
<circle cx="9.5" cy="707" r="2.6" fill="#f6ec70"/>
<path d="M9.5 702V712M4.5 707H14.5M6 703.5L13 710.5M6 710.5L13 703.5" stroke="#e8c830" stroke-width="0.7"/>
<!-- row16 -->
<rect x="7" y="756.5" width="6.5" height="6.5" fill="#a0a0a0" stroke="#808080" stroke-width="0.6"/>
<rect x="22" y="745" width="6.5" height="6.5" fill="#a0a0a0" stroke="#808080" stroke-width="0.6"/>
<rect x="11.5" y="749.5" width="13.5" height="9.5" fill="#f4efd6" stroke="#888" stroke-width="0.7"/>
<rect x="42" y="756.5" width="6.5" height="6.5" fill="#a0a0a0" stroke="#808080" stroke-width="0.6"/>
<rect x="57" y="745" width="6.5" height="6.5" fill="#a0a0a0" stroke="#808080" stroke-width="0.6"/>
<rect x="46.5" y="749.5" width="13.5" height="9.5" fill="#f4efd6" stroke="#888" stroke-width="0.7"/>
<!-- row17 -->
<rect x="8.5" y="785.5" width="16.5" height="6" rx="2" fill="#f2d46a" stroke="#a89040" stroke-width="0.6"/>
<path d="M25 788.5H27V794H18V798" fill="none" stroke="#999" stroke-width="0.8"/>
</svg>
<div class="a" style="left:72px;top:108px;width:1083px;height:24px;background:#d4d4d4"></div>
<div class="a" style="left:72px;top:132px;width:1083px;height:23px;background:#ececec"></div>
<div class="a" style="left:72px;top:155px;width:23px;height:593px;background:#ececec"></div>
<div class="a" style="left:95px;top:732px;width:1060px;height:16px;background:#f7f7f7"></div>
<div class="a" style="left:1138px;top:155px;width:17px;height:577px;background:#f8f8f8;border-right:1px solid #d0d0d0"></div>
<div class="a" style="left:1143px;top:182px;width:8px;height:358px;background:#808080;border-radius:4px"></div>
<div class="a" style="left:1083px;top:733px;width:71px;height:15px;background:#ebebeb;font-size:13px;line-height:15px;text-align:right;color:#111;letter-spacing:0.2px">10 &lt; 100</div>
<div class="a" style="left:594px;top:112px;font-size:12.2px;line-height:16px;color:#222">move_copy.dxf</div>
<div class="rl" style="left:95px;top:132px">-20</div><div style="position:absolute;left:115px;top:148px;width:1px;height:7px;background:#888"></div><div class="rl" style="left:135px;top:132px">-10</div><div style="position:absolute;left:155px;top:148px;width:1px;height:7px;background:#888"></div><div class="rl" style="left:175px;top:132px">0</div><div style="position:absolute;left:195px;top:148px;width:1px;height:7px;background:#888"></div><div class="rl" style="left:215px;top:132px">10</div><div style="position:absolute;left:235px;top:148px;width:1px;height:7px;background:#888"></div><div class="rl" style="left:255px;top:132px">20</div><div style="position:absolute;left:275px;top:148px;width:1px;height:7px;background:#888"></div><div class="rl" style="left:295px;top:132px">30</div><div style="position:absolute;left:315px;top:148px;width:1px;height:7px;background:#888"></div><div class="rl" style="left:335px;top:132px">40</div><div style="position:absolute;left:355px;top:148px;width:1px;height:7px;background:#888"></div><div class="rl" style="left:375px;top:132px">50</div><div style="position:absolute;left:395px;top:148px;width:1px;height:7px;background:#888"></div><div class="rl" style="left:415px;top:132px">60</div><div style="position:absolute;left:435px;top:148px;width:1px;height:7px;background:#888"></div><div class="rl" style="left:455px;top:132px">70</div><div style="position:absolute;left:475px;top:148px;width:1px;height:7px;background:#888"></div><div class="rl" style="left:495px;top:132px">80</div><div style="position:absolute;left:515px;top:148px;width:1px;height:7px;background:#888"></div><div class="rl" style="left:535px;top:132px">90</div><div style="position:absolute;left:555px;top:148px;width:1px;height:7px;background:#888"></div><div class="rl" style="left:575px;top:132px">100</div><div style="position:absolute;left:595px;top:148px;width:1px;height:7px;background:#888"></div><div class="rl" style="left:615px;top:132px">110</div><div style="position:absolute;left:635px;top:148px;width:1px;height:7px;background:#888"></div><div class="rl" style="left:655px;top:132px">120</div><div style="position:absolute;left:675px;top:148px;width:1px;height:7px;background:#888"></div><div class="rl" style="left:695px;top:132px">130</div><div style="position:absolute;left:715px;top:148px;width:1px;height:7px;background:#888"></div><div class="rl" style="left:735px;top:132px">140</div><div style="position:absolute;left:755px;top:148px;width:1px;height:7px;background:#888"></div><div class="rl" style="left:775px;top:132px">150</div><div style="position:absolute;left:795px;top:148px;width:1px;height:7px;background:#888"></div><div class="rl" style="left:815px;top:132px">160</div><div style="position:absolute;left:835px;top:148px;width:1px;height:7px;background:#888"></div><div class="rl" style="left:855px;top:132px">170</div><div style="position:absolute;left:875px;top:148px;width:1px;height:7px;background:#888"></div><div class="rl" style="left:895px;top:132px">180</div><div style="position:absolute;left:915px;top:148px;width:1px;height:7px;background:#888"></div><div class="rl" style="left:935px;top:132px">190</div><div style="position:absolute;left:955px;top:148px;width:1px;height:7px;background:#888"></div><div class="rl" style="left:975px;top:132px">200</div><div style="position:absolute;left:995px;top:148px;width:1px;height:7px;background:#888"></div><div class="rl" style="left:1015px;top:132px">210</div><div style="position:absolute;left:1035px;top:148px;width:1px;height:7px;background:#888"></div><div class="rl" style="left:1055px;top:132px">220</div><div style="position:absolute;left:1075px;top:148px;width:1px;height:7px;background:#888"></div><div class="rl" style="left:1095px;top:132px">230</div><div style="position:absolute;left:1115px;top:148px;width:1px;height:7px;background:#888"></div><div style="position:absolute;left:72px;top:155px;width:23px;height:593px;overflow:hidden"><div class="rv" style="left:-5px;top:537px"><span>-20</span></div><div style="position:absolute;left:16px;top:557px;width:7px;height:1px;background:#888"></div><div class="rv" style="left:-5px;top:497px"><span>-10</span></div><div style="position:absolute;left:16px;top:517px;width:7px;height:1px;background:#888"></div><div class="rv" style="left:-5px;top:457px"><span>0</span></div><div style="position:absolute;left:16px;top:477px;width:7px;height:1px;background:#888"></div><div class="rv" style="left:-5px;top:417px"><span>10</span></div><div style="position:absolute;left:16px;top:437px;width:7px;height:1px;background:#888"></div><div class="rv" style="left:-5px;top:377px"><span>20</span></div><div style="position:absolute;left:16px;top:397px;width:7px;height:1px;background:#888"></div><div class="rv" style="left:-5px;top:337px"><span>30</span></div><div style="position:absolute;left:16px;top:357px;width:7px;height:1px;background:#888"></div><div class="rv" style="left:-5px;top:297px"><span>40</span></div><div style="position:absolute;left:16px;top:317px;width:7px;height:1px;background:#888"></div><div class="rv" style="left:-5px;top:257px"><span>50</span></div><div style="position:absolute;left:16px;top:277px;width:7px;height:1px;background:#888"></div><div class="rv" style="left:-5px;top:217px"><span>60</span></div><div style="position:absolute;left:16px;top:237px;width:7px;height:1px;background:#888"></div><div class="rv" style="left:-5px;top:177px"><span>70</span></div><div style="position:absolute;left:16px;top:197px;width:7px;height:1px;background:#888"></div><div class="rv" style="left:-5px;top:137px"><span>80</span></div><div style="position:absolute;left:16px;top:157px;width:7px;height:1px;background:#888"></div><div class="rv" style="left:-5px;top:97px"><span>90</span></div><div style="position:absolute;left:16px;top:117px;width:7px;height:1px;background:#888"></div><div class="rv" style="left:-5px;top:57px"><span>100</span></div><div style="position:absolute;left:16px;top:77px;width:7px;height:1px;background:#888"></div><div class="rv" style="left:-5px;top:17px"><span>110</span></div><div style="position:absolute;left:16px;top:37px;width:7px;height:1px;background:#888"></div><div class="rv" style="left:-5px;top:-23px"><span>120</span></div><div style="position:absolute;left:16px;top:-3px;width:7px;height:1px;background:#888"></div></div>
<div class="a" style="left:95px;top:145px;width:0;height:0;border-left:6px solid transparent;border-right:6px solid transparent;border-top:6.5px solid #000"></div>
<div class="a" style="left:84px;top:371px;width:0;height:0;border-top:6px solid transparent;border-bottom:6px solid transparent;border-left:7px solid #000"></div>
<svg width="1043" height="577" viewBox="95 155 1043 577" style="position:absolute;left:95px;top:155px;display:block"><rect x="95" y="155" width="1043" height="577" fill="#000"/><rect x="194" y="155" width="2" height="577" fill="#0d0d0d"/><rect x="594" y="155" width="2" height="577" fill="#0d0d0d"/><rect x="994" y="155" width="2" height="577" fill="#0d0d0d"/><rect x="95" y="231" width="1043" height="2" fill="#0d0d0d"/><rect x="95" y="631" width="1043" height="2" fill="#0d0d0d"/><path d="M115 712h1v1h-1zM115 672h1v1h-1zM115 632h1v1h-1zM115 592h1v1h-1zM115 552h1v1h-1zM115 512h1v1h-1zM115 472h1v1h-1zM115 432h1v1h-1zM115 392h1v1h-1zM115 352h1v1h-1zM115 312h1v1h-1zM115 272h1v1h-1zM115 232h1v1h-1zM115 192h1v1h-1zM155 712h1v1h-1zM155 672h1v1h-1zM155 632h1v1h-1zM155 592h1v1h-1zM155 552h1v1h-1zM155 512h1v1h-1zM155 472h1v1h-1zM155 432h1v1h-1zM155 392h1v1h-1zM155 352h1v1h-1zM155 312h1v1h-1zM155 272h1v1h-1zM155 232h1v1h-1zM155 192h1v1h-1zM195 712h1v1h-1zM195 672h1v1h-1zM195 632h1v1h-1zM195 592h1v1h-1zM195 552h1v1h-1zM195 512h1v1h-1zM195 472h1v1h-1zM195 432h1v1h-1zM195 392h1v1h-1zM195 352h1v1h-1zM195 312h1v1h-1zM195 272h1v1h-1zM195 232h1v1h-1zM195 192h1v1h-1zM235 712h1v1h-1zM235 672h1v1h-1zM235 632h1v1h-1zM235 592h1v1h-1zM235 552h1v1h-1zM235 512h1v1h-1zM235 472h1v1h-1zM235 432h1v1h-1zM235 392h1v1h-1zM235 352h1v1h-1zM235 312h1v1h-1zM235 272h1v1h-1zM235 232h1v1h-1zM235 192h1v1h-1zM275 712h1v1h-1zM275 672h1v1h-1zM275 632h1v1h-1zM275 592h1v1h-1zM275 552h1v1h-1zM275 512h1v1h-1zM275 472h1v1h-1zM275 432h1v1h-1zM275 392h1v1h-1zM275 352h1v1h-1zM275 312h1v1h-1zM275 272h1v1h-1zM275 232h1v1h-1zM275 192h1v1h-1zM315 712h1v1h-1zM315 672h1v1h-1zM315 632h1v1h-1zM315 592h1v1h-1zM315 552h1v1h-1zM315 512h1v1h-1zM315 472h1v1h-1zM315 432h1v1h-1zM315 392h1v1h-1zM315 352h1v1h-1zM315 312h1v1h-1zM315 272h1v1h-1zM315 232h1v1h-1zM315 192h1v1h-1zM355 712h1v1h-1zM355 672h1v1h-1zM355 632h1v1h-1zM355 592h1v1h-1zM355 552h1v1h-1zM355 512h1v1h-1zM355 472h1v1h-1zM355 432h1v1h-1zM355 392h1v1h-1zM355 352h1v1h-1zM355 312h1v1h-1zM355 272h1v1h-1zM355 232h1v1h-1zM355 192h1v1h-1zM395 712h1v1h-1zM395 672h1v1h-1zM395 632h1v1h-1zM395 592h1v1h-1zM395 552h1v1h-1zM395 512h1v1h-1zM395 472h1v1h-1zM395 432h1v1h-1zM395 392h1v1h-1zM395 352h1v1h-1zM395 312h1v1h-1zM395 272h1v1h-1zM395 232h1v1h-1zM395 192h1v1h-1zM435 712h1v1h-1zM435 672h1v1h-1zM435 632h1v1h-1zM435 592h1v1h-1zM435 552h1v1h-1zM435 512h1v1h-1zM435 472h1v1h-1zM435 432h1v1h-1zM435 392h1v1h-1zM435 352h1v1h-1zM435 312h1v1h-1zM435 272h1v1h-1zM435 232h1v1h-1zM435 192h1v1h-1zM475 712h1v1h-1zM475 672h1v1h-1zM475 632h1v1h-1zM475 592h1v1h-1zM475 552h1v1h-1zM475 512h1v1h-1zM475 472h1v1h-1zM475 432h1v1h-1zM475 392h1v1h-1zM475 352h1v1h-1zM475 312h1v1h-1zM475 272h1v1h-1zM475 232h1v1h-1zM475 192h1v1h-1zM515 712h1v1h-1zM515 672h1v1h-1zM515 632h1v1h-1zM515 592h1v1h-1zM515 552h1v1h-1zM515 512h1v1h-1zM515 472h1v1h-1zM515 432h1v1h-1zM515 392h1v1h-1zM515 352h1v1h-1zM515 312h1v1h-1zM515 272h1v1h-1zM515 232h1v1h-1zM515 192h1v1h-1zM555 712h1v1h-1zM555 672h1v1h-1zM555 632h1v1h-1zM555 592h1v1h-1zM555 552h1v1h-1zM555 512h1v1h-1zM555 472h1v1h-1zM555 432h1v1h-1zM555 392h1v1h-1zM555 352h1v1h-1zM555 312h1v1h-1zM555 272h1v1h-1zM555 232h1v1h-1zM555 192h1v1h-1zM595 712h1v1h-1zM595 672h1v1h-1zM595 632h1v1h-1zM595 592h1v1h-1zM595 552h1v1h-1zM595 512h1v1h-1zM595 472h1v1h-1zM595 432h1v1h-1zM595 392h1v1h-1zM595 352h1v1h-1zM595 312h1v1h-1zM595 272h1v1h-1zM595 232h1v1h-1zM595 192h1v1h-1zM635 712h1v1h-1zM635 672h1v1h-1zM635 632h1v1h-1zM635 592h1v1h-1zM635 552h1v1h-1zM635 512h1v1h-1zM635 472h1v1h-1zM635 432h1v1h-1zM635 392h1v1h-1zM635 352h1v1h-1zM635 312h1v1h-1zM635 272h1v1h-1zM635 232h1v1h-1zM635 192h1v1h-1zM675 712h1v1h-1zM675 672h1v1h-1zM675 632h1v1h-1zM675 592h1v1h-1zM675 552h1v1h-1zM675 512h1v1h-1zM675 472h1v1h-1zM675 432h1v1h-1zM675 392h1v1h-1zM675 352h1v1h-1zM675 312h1v1h-1zM675 272h1v1h-1zM675 232h1v1h-1zM675 192h1v1h-1zM715 712h1v1h-1zM715 672h1v1h-1zM715 632h1v1h-1zM715 592h1v1h-1zM715 552h1v1h-1zM715 512h1v1h-1zM715 472h1v1h-1zM715 432h1v1h-1zM715 392h1v1h-1zM715 352h1v1h-1zM715 312h1v1h-1zM715 272h1v1h-1zM715 232h1v1h-1zM715 192h1v1h-1zM755 712h1v1h-1zM755 672h1v1h-1zM755 632h1v1h-1zM755 592h1v1h-1zM755 552h1v1h-1zM755 512h1v1h-1zM755 472h1v1h-1zM755 432h1v1h-1zM755 392h1v1h-1zM755 352h1v1h-1zM755 312h1v1h-1zM755 272h1v1h-1zM755 232h1v1h-1zM755 192h1v1h-1zM795 712h1v1h-1zM795 672h1v1h-1zM795 632h1v1h-1zM795 592h1v1h-1zM795 552h1v1h-1zM795 512h1v1h-1zM795 472h1v1h-1zM795 432h1v1h-1zM795 392h1v1h-1zM795 352h1v1h-1zM795 312h1v1h-1zM795 272h1v1h-1zM795 232h1v1h-1zM795 192h1v1h-1zM835 712h1v1h-1zM835 672h1v1h-1zM835 632h1v1h-1zM835 592h1v1h-1zM835 552h1v1h-1zM835 512h1v1h-1zM835 472h1v1h-1zM835 432h1v1h-1zM835 392h1v1h-1zM835 352h1v1h-1zM835 312h1v1h-1zM835 272h1v1h-1zM835 232h1v1h-1zM835 192h1v1h-1zM875 712h1v1h-1zM875 672h1v1h-1zM875 632h1v1h-1zM875 592h1v1h-1zM875 552h1v1h-1zM875 512h1v1h-1zM875 472h1v1h-1zM875 432h1v1h-1zM875 392h1v1h-1zM875 352h1v1h-1zM875 312h1v1h-1zM875 272h1v1h-1zM875 232h1v1h-1zM875 192h1v1h-1zM915 712h1v1h-1zM915 672h1v1h-1zM915 632h1v1h-1zM915 592h1v1h-1zM915 552h1v1h-1zM915 512h1v1h-1zM915 472h1v1h-1zM915 432h1v1h-1zM915 392h1v1h-1zM915 352h1v1h-1zM915 312h1v1h-1zM915 272h1v1h-1zM915 232h1v1h-1zM915 192h1v1h-1zM955 712h1v1h-1zM955 672h1v1h-1zM955 632h1v1h-1zM955 592h1v1h-1zM955 552h1v1h-1zM955 512h1v1h-1zM955 472h1v1h-1zM955 432h1v1h-1zM955 392h1v1h-1zM955 352h1v1h-1zM955 312h1v1h-1zM955 272h1v1h-1zM955 232h1v1h-1zM955 192h1v1h-1zM995 712h1v1h-1zM995 672h1v1h-1zM995 632h1v1h-1zM995 592h1v1h-1zM995 552h1v1h-1zM995 512h1v1h-1zM995 472h1v1h-1zM995 432h1v1h-1zM995 392h1v1h-1zM995 352h1v1h-1zM995 312h1v1h-1zM995 272h1v1h-1zM995 232h1v1h-1zM995 192h1v1h-1zM1035 712h1v1h-1zM1035 672h1v1h-1zM1035 632h1v1h-1zM1035 592h1v1h-1zM1035 552h1v1h-1zM1035 512h1v1h-1zM1035 472h1v1h-1zM1035 432h1v1h-1zM1035 392h1v1h-1zM1035 352h1v1h-1zM1035 312h1v1h-1zM1035 272h1v1h-1zM1035 232h1v1h-1zM1035 192h1v1h-1zM1075 712h1v1h-1zM1075 672h1v1h-1zM1075 632h1v1h-1zM1075 592h1v1h-1zM1075 552h1v1h-1zM1075 512h1v1h-1zM1075 472h1v1h-1zM1075 432h1v1h-1zM1075 392h1v1h-1zM1075 352h1v1h-1zM1075 312h1v1h-1zM1075 272h1v1h-1zM1075 232h1v1h-1zM1075 192h1v1h-1zM1115 712h1v1h-1zM1115 672h1v1h-1zM1115 632h1v1h-1zM1115 592h1v1h-1zM1115 552h1v1h-1zM1115 512h1v1h-1zM1115 472h1v1h-1zM1115 432h1v1h-1zM1115 392h1v1h-1zM1115 352h1v1h-1zM1115 312h1v1h-1zM1115 272h1v1h-1zM1115 232h1v1h-1zM1115 192h1v1h-1z" fill="#383838"/><path d="M211.0 632.0 A16 16 0 0 1 195.0 616.0 L195.0 536.0 A16 16 0 0 1 211.0 520.0 L266.1 520.0 A16 16 0 0 1 275.0 522.7 L379.9 592.7 A16 16 0 0 1 387.0 606.1 L387.0 616.0 A16 16 0 0 1 371.0 632.0 Z" fill="none" stroke="#d8d8d8" stroke-width="1.6"/><path d="M211.0 627.0 A11 11 0 0 1 200.0 616.0 L200.0 536.0 A11 11 0 0 1 211.0 525.0 L266.2 525.0 A11 11 0 0 1 272.3 526.9 L377.1 596.9 A11 11 0 0 1 382.0 606.1 L382.0 616.0 A11 11 0 0 1 371.0 627.0 Z" transform="translate(0.5 0.5)" fill="none" stroke="#b0b0b0" stroke-width="1"/><path d="M191 536H231M211 516V556" stroke="#900000" stroke-width="1.4" stroke-dasharray="3 1.3 0.8 1.2" fill="none"/><circle cx="211" cy="536" r="1.6" fill="#a00000"/><circle cx="211" cy="536" r="4.3" fill="none" stroke="#f0f0f0" stroke-width="1.4"/><path d="M191 616H231M211 596V636" stroke="#900000" stroke-width="1.4" stroke-dasharray="3 1.3 0.8 1.2" fill="none"/><circle cx="211" cy="616" r="1.6" fill="#a00000"/><circle cx="211" cy="616" r="4.3" fill="none" stroke="#f0f0f0" stroke-width="1.4"/><path d="M351 616H391M371 596V636" stroke="#900000" stroke-width="1.4" stroke-dasharray="3 1.3 0.8 1.2" fill="none"/><circle cx="371" cy="616" r="1.6" fill="#a00000"/><circle cx="371" cy="616" r="4.3" fill="none" stroke="#f0f0f0" stroke-width="1.4"/><path d="M238 556H280M259 535V577" stroke="#900000" stroke-width="1.4" stroke-dasharray="3 1.3 0.8 1.2" fill="none"/><circle cx="259" cy="556" r="1.6" fill="#a00000"/><circle cx="259" cy="556" r="12.8" fill="none" stroke="#f0f0f0" stroke-width="1.4"/><path d="M302 596H344M323 575V617" stroke="#900000" stroke-width="1.4" stroke-dasharray="3 1.3 0.8 1.2" fill="none"/><circle cx="323" cy="596" r="1.6" fill="#a00000"/><circle cx="323" cy="596" r="12.8" fill="none" stroke="#f0f0f0" stroke-width="1.4"/><circle cx="195" cy="632" r="5" fill="none" stroke="#a00000" stroke-width="1.2"/><path d="M180 632H215M195 612V652" stroke="#a00000" stroke-width="1"/></svg>
<div class="a" style="left:72px;top:748px;width:1082px;height:23px;background:#fff;border:1px solid #c6c6c6;border-left:1px solid #b0b0b0"></div>
<div class="a" style="left:77.5px;top:750px;font-size:13px;line-height:16px;color:#0000d0;letter-spacing:0.33px"><i>Command:</i> modifymenu</div>
<div class="a" style="left:72px;top:771px;width:1083px;height:27px;background:#ececec"></div>
<div class="a" style="left:73px;top:778px;font-size:13px;line-height:16px;color:#111;letter-spacing:0.4px">Command:</div>
<div class="a" style="left:142px;top:776px;width:985px;height:18px;background:#fff"></div>
<div class="a" style="left:1127px;top:772px;width:26px;height:26px;border:1px solid #a8a8a8;background:linear-gradient(#e4e4e4,#f4f4f4)"></div>
<svg class="a" style="left:1133px;top:780px" width="14" height="10"><rect x="0.5" y="0.5" width="13" height="9" fill="#f0f0f0" stroke="#555"/><rect x="0" y="0" width="14" height="3" fill="#000"/><circle cx="10.5" cy="1.5" r="0.7" fill="#888"/></svg>

<div class="a" style="left:1155px;top:108px;width:300px;height:690px;background:#fff;border-left:1px solid #c8c8c8;border-right:1px solid #c8c8c8"></div>
<div class="a" style="left:1155px;top:108px;width:300px;height:23px;background:linear-gradient(#ececec,#dadada)"></div>
<div class="a" style="left:1155px;top:111px;width:335px;text-align:center;font-size:12px;line-height:16px;color:#222">Layer List</div>
<svg class="a" style="left:1155px;top:108px" width="300" height="130" viewBox="1155 108 300 130">
<defs>
<g id="eye"><ellipse cx="0" cy="0.3" rx="7.6" ry="5.4" fill="#000"/><path d="M-6 1Q0 -5.5 6 1Q0 6.5 -6 1Z" fill="#fff"/><circle cx="0.2" cy="0.6" r="2.5" fill="#000"/><circle cx="-0.6" cy="-0.4" r="0.7" fill="#fff"/></g>
<g id="lock"><path d="M-3 -1V-4A3 3 0 0 1 3 -4V-1" fill="none" stroke="#b8b8b8" stroke-width="1.4"/><rect x="-5" y="-1" width="10" height="8" fill="#b8b8b8"/></g>
</defs>
<circle cx="1164" cy="118" r="7" fill="#8a8a8a"/>
<path d="M1161 115L1167 121M1167 115L1161 121" stroke="#fff" stroke-width="1.8"/>
<circle cx="1182" cy="118" r="7" fill="#8a8a8a"/>
<rect x="1178.5" y="117" width="5" height="4" fill="none" stroke="#fff" stroke-width="1"/>
<path d="M1180.5 116.5V114.5H1185.5V118.5H1184" fill="none" stroke="#fff" stroke-width="1"/>
<!-- toolbar buttons -->
<g>
<rect x="1155.5" y="130.5" width="59" height="25.5" fill="url(#lbg)" stroke="#b0b0b0"/>
<rect x="1215" y="130.5" width="59.5" height="25.5" fill="url(#lbg)" stroke="#b0b0b0"/>
<rect x="1274.5" y="130.5" width="59.5" height="25.5" fill="url(#lbg)" stroke="#b0b0b0"/>
<rect x="1334" y="130.5" width="59.5" height="25.5" fill="url(#lbg)" stroke="#b0b0b0"/>
<rect x="1393.5" y="130.5" width="60" height="25.5" fill="url(#lbg)" stroke="#b0b0b0"/>
</g>
<linearGradient id="lbg" x1="0" y1="0" x2="0" y2="1"><stop offset="0" stop-color="#f4f4f4"/><stop offset="1" stop-color="#e6e6e6"/></linearGradient>
<rect x="1155" y="155.5" width="299" height="1.5" fill="#b8b8b8"/>
<use href="#eye" x="1185" y="142.5"/>
<g opacity="0.3"><use href="#eye" x="1244.5" y="142.5"/></g>
<path d="M1298.5 143H1311M1304.7 136.5V149.5" stroke="#e00" stroke-width="3.2"/>
<path d="M1358.5 143H1371" stroke="#e00" stroke-width="3.2"/>
<path d="M1418 149L1430 137.5L1432.5 140L1420.5 151.5L1417.5 152Z" fill="#e8b030" stroke="#8a6010" stroke-width="0.6"/>
<path d="M1430 137.5L1431.5 136L1434 138.5L1432.5 140Z" fill="#e02020"/>
<!-- rows -->
<rect x="1161.5" y="163.5" width="15" height="8" fill="#fff" stroke="#111" stroke-width="1"/>
<rect x="1161.5" y="183.5" width="15" height="8" fill="#f00" stroke="#222" stroke-width="1"/>
<rect x="1161" y="203" width="16" height="9" fill="#000"/>
<rect x="1161" y="223" width="16" height="9" fill="#000"/>
<use href="#eye" x="1423" y="167"/><use href="#eye" x="1423" y="187"/><use href="#eye" x="1423" y="207"/><use href="#eye" x="1423" y="227"/>
<use href="#lock" x="1445" y="167"/><use href="#lock" x="1445" y="187"/><use href="#lock" x="1445" y="207"/><use href="#lock" x="1445" y="227"/>
<path d="M1395 233L1406 222L1408 224L1397 235L1394.5 235.5Z" fill="#e8b030" stroke="#8a6010" stroke-width="0.6"/>
<path d="M1406 222L1407.5 220.5L1409.5 222.5L1408 224Z" fill="#e02020"/>
</svg>
<div class="lt" style="top:159px">0</div>
<div class="lt" style="top:179px">Center</div>
<div class="lt" style="top:199px">Thin</div>
<div class="lt" style="top:219px">Visible</div>

<div class="a" style="left:1455px;top:108px;width:45px;height:690px;background:linear-gradient(90deg,#e8e8e8,#cdcdcd)"></div><div class="a" style="left:1498px;top:108px;width:2px;height:690px;background:#b4b4b4"></div>
<svg class="a" style="left:1455px;top:108px" width="45" height="400" viewBox="1455 108 45 400">
<g fill="#9a9a9a"><rect x="1462" y="116" width="2" height="2"/><rect x="1468" y="116" width="2" height="2"/><rect x="1474" y="116" width="2" height="2"/><rect x="1480" y="116" width="2" height="2"/><rect x="1486" y="116" width="2" height="2"/></g>

<rect x="1456" y="120" width="42.5" height="42.5" rx="6" fill="#b5b5b5"/>
<rect x="1456" y="417" width="44" height="42.5" rx="6" fill="#b5b5b5"/>
<path d="M1463 261.5H1500M1463 409.5H1500" stroke="#666" stroke-dasharray="1 2"/>
<defs><g id="win"><rect x="0.5" y="0.5" width="27" height="27" fill="#fff" stroke="#222" stroke-width="1"/><rect x="0" y="0" width="28" height="5" fill="#000"/><rect x="1.5" y="1" width="3" height="3" fill="#fff"/></g></defs>
<use href="#win" x="1463" y="127"/>
<path d="M1470 149V138L1474 136V147Z" fill="#ccc" stroke="#555" stroke-width="0.7"/>
<path d="M1474 147V136L1486 131V142Z" fill="#fff" stroke="#555" stroke-width="0.8"/>
<path d="M1479 143L1482 136L1484 141Z" fill="none" stroke="#e44" stroke-width="0.8"/>
<use href="#win" x="1463" y="174"/>
<rect x="1469" y="183" width="10" height="8" fill="#f5ecc6" stroke="#999" stroke-width="0.8"/>
<circle cx="1481" cy="192" r="4.5" fill="#f5ecc6" stroke="#999" stroke-width="0.8"/>
<use href="#win" x="1463" y="220"/>
<rect x="1468.5" y="231.5" width="17" height="11" rx="2.5" fill="#f6f6f6" stroke="#b8c8e0" stroke-width="0.8"/>
<use href="#win" x="1463" y="276"/>
<g fill="#000"><rect x="1466" y="284" width="4" height="3"/><rect x="1466" y="290" width="4" height="3"/><rect x="1466" y="296" width="4" height="3"/></g>
<g fill="none" stroke="#333" stroke-width="0.7"><rect x="1472.5" y="284.5" width="14" height="2.5"/><rect x="1472.5" y="290.5" width="14" height="2.5"/><rect x="1472.5" y="296.5" width="14" height="2.5"/></g>
<use href="#win" x="1463" y="322"/>
<path d="M1467 332H1486L1479 339V346L1475 345V339Z" fill="#9a9a9a" stroke="#666" stroke-width="0.6"/>
<use href="#win" x="1463" y="369"/>
<path d="M1469 378V393L1474 387H1484V381H1474Z" fill="#fff" stroke="#333" stroke-width="0.8"/>
<rect x="1474" y="381" width="10" height="6" fill="#aaa"/>
<path d="M1466 385H1488" stroke="#f08080" stroke-width="0.6" stroke-dasharray="2 1"/>
<use href="#win" x="1463" y="424"/>
<g stroke="#888" stroke-width="0.6"><path d="M1466 433H1476M1466 436H1476M1466 439H1478M1466 442H1478"/></g>
<rect x="1463.5" y="446" width="27" height="1" fill="#333"/>
<text x="1472" y="451" font-family="Liberation Sans" font-size="3.5" fill="#333">command</text>
<use href="#win" x="1463" y="471"/>
<rect x="1470" y="480" width="14" height="16" rx="1" fill="#c7862a"/>
<rect x="1472" y="482" width="10" height="12" fill="#f4f4f4"/>
<rect x="1474" y="478.5" width="6" height="3" fill="#888"/>
</svg>

<div class="a" style="left:0;top:798px;width:1500px;height:46px;background:#dcdcdc;border-top:1px solid #f0f0f0"></div>
<div class="st" style="left:2px;top:807px">-23.5,63.75</div>
<div class="st" style="left:2px;top:827px">@-23.5,63.75</div>
<div class="a" style="left:253px;top:802px;width:1px;height:40px;background:#8a8a8a"></div>
<div class="st" style="left:256px;top:807px">67.9435&lt;110°</div>
<div class="st" style="left:256px;top:827px">@67.9435&lt;110°</div>
<div class="a" style="left:506px;top:819px;width:6px;height:6px;border-radius:3px;background:#c4c4c4"></div>
<div class="st" style="left:597.5px;top:816px">Select entity or region</div>
<svg class="a" style="left:716px;top:805px" width="21" height="32"><path d="M1.5 11Q1.5 1 10.5 1Q19.5 1 19.5 11V21Q19.5 31 10.5 31Q1.5 31 1.5 21Z" fill="#fff" stroke="#333" stroke-width="1"/><path d="M1.5 13H19.5" stroke="#333" stroke-width="1.4"/><path d="M10.5 1V13" stroke="#333" stroke-width="0.8"/><rect x="8.5" y="4" width="4" height="7" rx="2" fill="#fff" stroke="#333" stroke-width="0.9"/></svg>
<div class="a" style="left:940px;top:819px;width:6px;height:6px;border-radius:3px;background:#c4c4c4"></div>
<div class="st" style="left:949.5px;top:816px">No entities selected.</div>
<div class="a" style="left:1269px;top:819px;width:6px;height:6px;border-radius:3px;background:#c4c4c4"></div>

<svg class="a" style="left:0;top:130px" width="120" height="110" viewBox="0 130 120 110">
<defs><radialGradient id="ring" cx="0.5" cy="0.5" r="0.5">
<stop offset="0.74" stop-color="#7896b8" stop-opacity="0"/>
<stop offset="0.78" stop-color="#7896b8" stop-opacity="0.18"/>
<stop offset="0.86" stop-color="#7896b8" stop-opacity="0.3"/>
<stop offset="0.93" stop-color="#7896b8" stop-opacity="0.45"/>
<stop offset="0.98" stop-color="#7896b8" stop-opacity="0.25"/>
<stop offset="1" stop-color="#7896b8" stop-opacity="0"/></radialGradient></defs>
<circle cx="28.5" cy="178.5" r="37" fill="url(#ring)"/>
</svg>
<div class="a" style="left:13px;top:208px;width:87px;height:24px;border:1px solid #c8ccd4;border-radius:3px;background:linear-gradient(#f6f8fb,#e4e8ee);box-shadow:0 1px 2px rgba(0,0,0,0.2)"></div>
<div class="a" style="left:18px;top:212.5px;font-size:13.8px;line-height:17px;color:#111">Move / Copy</div>
<svg class="a" style="left:23.5px;top:177.5px" width="20" height="32"><path d="M2.5 3.5V24.5L7.3 20.2L11.8 29.5L15.3 28L11.2 18.8L17.2 18.3Z" fill="#fff" stroke="#000" stroke-width="1.2" stroke-linejoin="round"/></svg>
<svg class="a" style="left:90px;top:108px" width="24" height="24" viewBox="90 108 24 24"><circle cx="102" cy="118.7" r="5.4" fill="#f4f4f4" stroke="#2a3f8a" stroke-width="2"/><path d="M99 116L101 121M97.5 119.5H103" stroke="#d08080" stroke-width="0.6"/><path d="M103 119.5L107 123.5" stroke="#f0a020" stroke-width="2.2"/><circle cx="107.5" cy="124" r="1.2" fill="#e07070"/></svg>

</body></html>
